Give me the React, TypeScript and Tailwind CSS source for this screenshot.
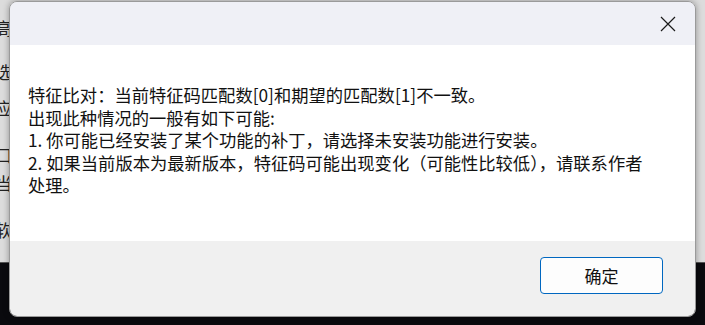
export default function App() {
  const lines = [
    '特征比对：当前特征码匹配数[0]和期望的匹配数[1]不一致。',
    '出现此种情况的一般有如下可能:',
    '1. 你可能已经安装了某个功能的补丁，请选择未安装功能进行安装。',
    '2. 如果当前版本为最新版本，特征码可能出现变化（可能性比较低），请联系作者',
    '处理。',
  ];

  const behind = [
    { ch: '高', top: 'top-[18px]' },
    { ch: '选', top: 'top-[62px]' },
    { ch: '应', top: 'top-[98px]' },
    { ch: '口', top: 'top-[145px]' },
    { ch: '当', top: 'top-[173px]' },
    { ch: '软', top: 'top-[220px]' },
  ];

  return (
    <div
      className="relative w-[705px] h-[325px] overflow-hidden bg-[#0a0a0e]"
      style={{ fontFamily: '"Microsoft YaHei", "Noto Sans CJK SC", "Noto Sans", sans-serif' }}
    >
      {/* window behind the dialog */}
      <div className="absolute left-0 top-0 w-full h-[263px] bg-[#dcdcdc] border-b border-[#555]">
        {behind.map((b) => (
          <span key={b.ch} className={`absolute left-[-5px] ${b.top} text-[17px] leading-[20px] text-[#222]`}>
            {b.ch}
          </span>
        ))}
      </div>

      {/* dialog */}
      <div className="absolute left-[9px] top-[1px] w-[687px] h-[316px] flex flex-col rounded-lg border border-[#9a9a9a] overflow-hidden shadow-[0_0_6px_rgba(0,0,0,0.35)]">
        <div className="h-[43px] bg-[#eff0f6] flex items-center justify-end pr-[19px]">
          <svg width="16" height="16" viewBox="0 0 16 16" className="text-[#1a1a1a]">
            <path d="M1 1L15 15M15 1L1 15" stroke="currentColor" strokeWidth="1.2" fill="none" />
          </svg>
        </div>
        <div className="h-[196px] bg-white pt-[39px] pl-[18px] text-[17.3px] leading-[22.5px] text-[#111]">
          {lines.map((l, i) => (
            <div key={i} className="whitespace-nowrap">
              {l}
            </div>
          ))}
        </div>
        <div className="flex-1 bg-[#f0f0f0] flex justify-end pt-[16px] pr-[32px]">
          <button className="w-[123px] h-[37px] rounded-[4px] border border-[#0067c0] bg-[#fdfdfd] text-[17px] text-[#111] flex items-center justify-center">
            确定
          </button>
        </div>
      </div>
    </div>
  );
}
